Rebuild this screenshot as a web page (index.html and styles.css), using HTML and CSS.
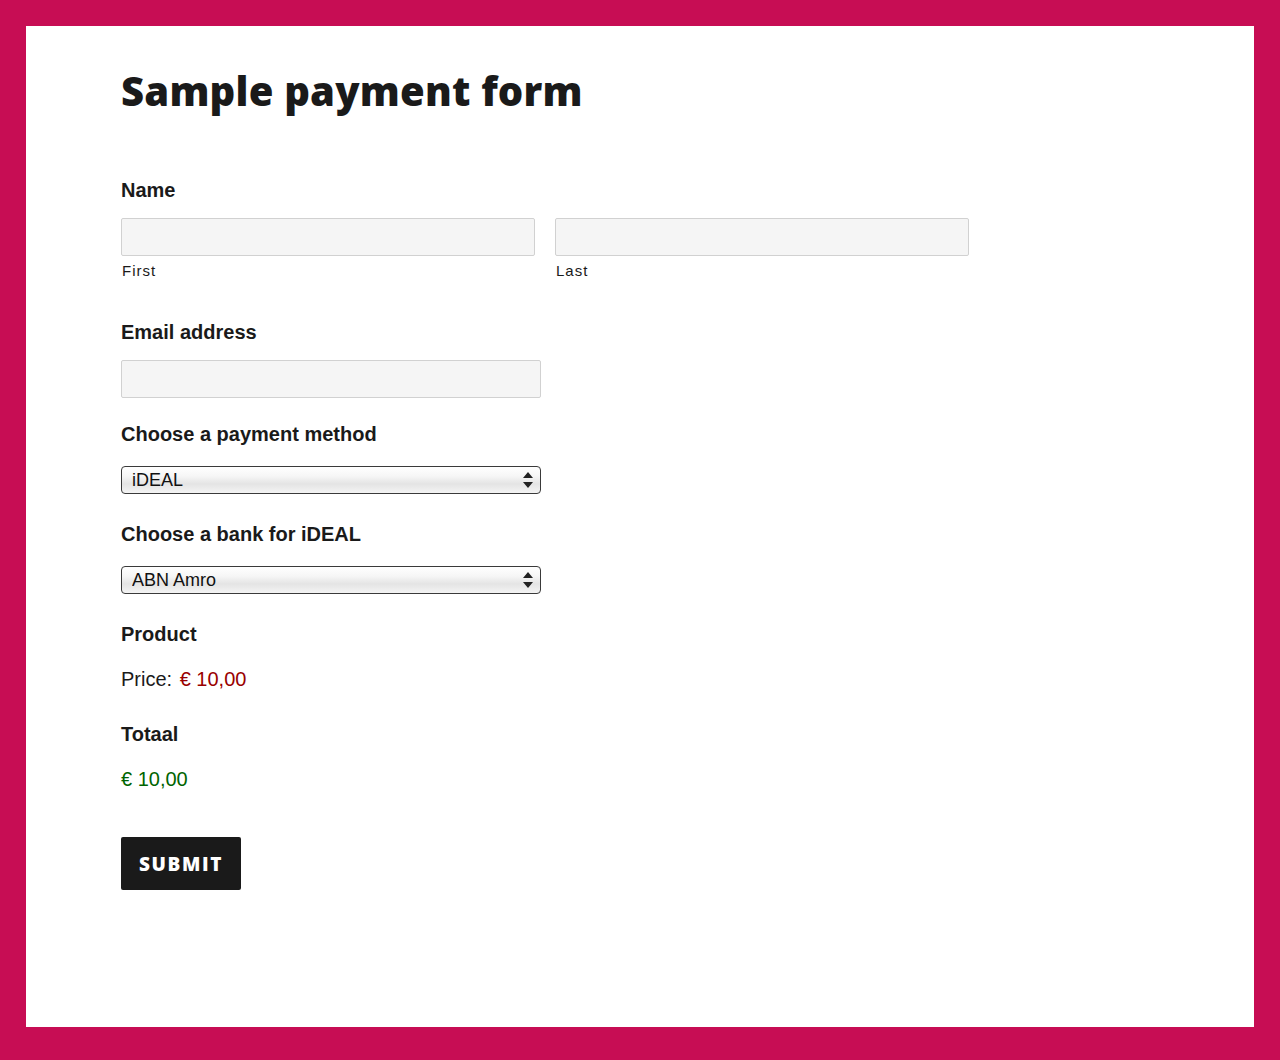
FILE: index.html
```html
<!DOCTYPE html>
<html>
<head>
<meta charset="utf-8">
<title>Sample payment form</title>
<link rel="stylesheet" href="styles.css">
</head>
<body>
<div class="page">
  <h1 class="title">Sample payment form</h1>
  <form class="form">
    <div class="field field-name">
      <div class="label">Name</div>
      <div class="name-row">
        <div class="name-col">
          <input class="input input-name" type="text">
          <div class="sublabel">First</div>
        </div>
        <div class="name-col">
          <input class="input input-name" type="text">
          <div class="sublabel">Last</div>
        </div>
      </div>
    </div>
    <div class="field field-email">
      <div class="label">Email address</div>
      <input class="input input-email" type="text">
    </div>
    <div class="field field-select">
      <div class="label">Choose a payment method</div>
      <div class="select-wrap">
        <select class="select"><option>iDEAL</option></select>
        <svg class="select-arrows" width="10" height="16" viewBox="0 0 10 16"><path d="M5 0 L10 6 L0 6 Z M0 10 L10 10 L5 16 Z" fill="#222"/></svg>
      </div>
    </div>
    <div class="field field-select">
      <div class="label">Choose a bank for iDEAL</div>
      <div class="select-wrap">
        <select class="select"><option>ABN Amro</option></select>
        <svg class="select-arrows" width="10" height="16" viewBox="0 0 10 16"><path d="M5 0 L10 6 L0 6 Z M0 10 L10 10 L5 16 Z" fill="#222"/></svg>
      </div>
    </div>
    <div class="field field-product">
      <div class="label">Product</div>
      <div class="value"><span>Price:</span> <span class="price">€ 10,00</span></div>
    </div>
    <div class="field field-total">
      <div class="label">Totaal</div>
      <div class="value total">€ 10,00</div>
    </div>
    <button class="submit" type="button">Submit</button>
  </form>
</div>
</body>
</html>
```

FILE: styles.css
```css
html, body {
  margin: 0;
  padding: 0;
}
body {
  background: #c70d54;
  padding: 26px 26px 33px 26px;
  font-family: "Liberation Sans", Arial, sans-serif;
  color: #1a1a1a;
}
.page {
  background: #fff;
  height: 1001px;
  box-sizing: border-box;
  padding: 41px 0 0 95px;
}
.title {
  margin: 0;
  font-family: "Open Sans", sans-serif;
  font-weight: 800;
  font-size: 40px;
  line-height: 48px;
  color: #1a1a1a;
  letter-spacing: 0.2px;
}
.form {
  margin-top: 63px;
}
.label {
  font-size: 20px;
  font-weight: bold;
  line-height: 25px;
  color: #1a1a1a;
}
.field-name .label { margin-bottom: 15px; }
.name-row {
  display: flex;
  gap: 20px;
}
.name-col {
  display: flex;
  flex-direction: column;
}
.input {
  display: block;
  box-sizing: border-box;
  height: 38px;
  background: #f5f5f5;
  border: 1px solid #d1d1d1;
  border-radius: 2px;
  margin: 0;
  padding: 0 8px;
}
.input-name { width: 414px; }
.input-email { width: 420px; }
.sublabel {
  font-size: 15px;
  line-height: 18px;
  letter-spacing: 1px;
  margin-top: 6px;
  margin-left: 1px;
  color: #1a1a1a;
}
.field-email { margin-top: 40px; }
.field-email .label { margin-bottom: 15px; }
.field-select { margin-top: 24px; }
.field-select + .field-select { margin-top: 28px; }
.field-select .label { margin-bottom: 19px; }
.select-wrap {
  position: relative;
  width: 420px;
  height: 28px;
}
.select {
  -webkit-appearance: none;
  appearance: none;
  display: block;
  box-sizing: border-box;
  width: 420px;
  height: 28px;
  margin: 0;
  padding: 0 0 0 10px;
  border: 1px solid #3a3a3a;
  border-radius: 4px;
  background: linear-gradient(#ffffff 0%, #f6f6f6 35%, #e4e4e4 65%, #f4f4f4 100%);
  font-family: "Liberation Sans", Arial, sans-serif;
  font-size: 18px;
  color: #111;
}
.select-arrows {
  position: absolute;
  right: 8px;
  top: 6px;
  pointer-events: none;
}
.field-product { margin-top: 28px; }
.field-total { margin-top: 30px; }
.value {
  font-size: 20px;
  line-height: 25px;
  margin-top: 20px;
  color: #1a1a1a;
}
.price { color: #990000; margin-left: 2px; }
.total { color: #006400; }
.submit {
  display: block;
  margin-top: 45px;
  width: 120px;
  height: 53px;
  background: #1a1a1a;
  color: #fff;
  border: none;
  border-radius: 2px;
  font-family: "Open Sans", sans-serif;
  font-weight: 800;
  font-size: 19px;
  letter-spacing: 1.6px;
  text-transform: uppercase;
  padding: 0;
}
```
